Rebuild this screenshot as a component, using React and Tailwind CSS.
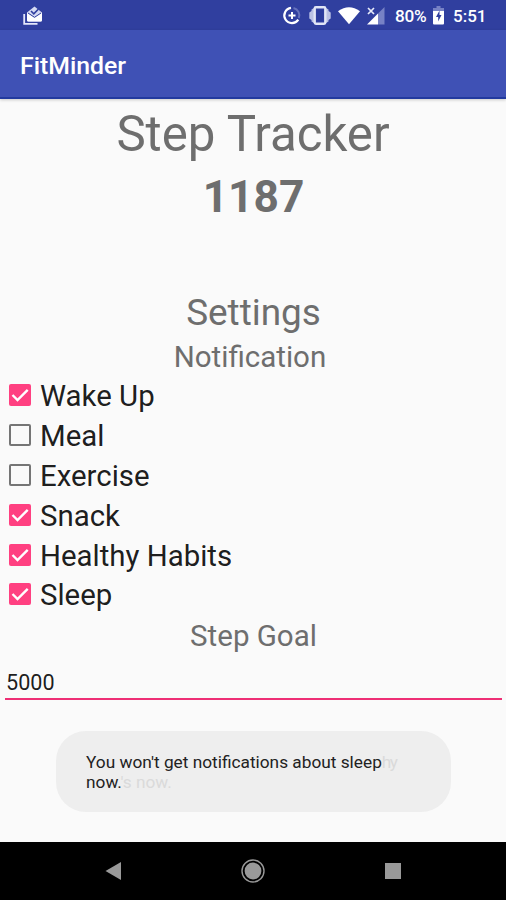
import { useState } from 'react';

const initialOptions = [
  { label: 'Wake Up', checked: true },
  { label: 'Meal', checked: false },
  { label: 'Exercise', checked: false },
  { label: 'Snack', checked: true },
  { label: 'Healthy Habits', checked: true },
  { label: 'Sleep', checked: true },
];

const StatusBar = () => (
  <div className="flex h-[30px] items-center bg-[#303f9f] text-white">
    {/* Mail notification */}
    <svg className="ml-[23px] h-5 w-5" viewBox="0 0 20 20" fill="none">
      <path d="M1.2 9V18.8H14.5" stroke="#e4e7fa" strokeWidth="1.8" />
      <path d="M4 7.5L11.5 1.5L19 7.5V15Q19 16.5 17.5 16.5H5.5Q4 16.5 4 15Z" fill="#d5daf3" />
      <path d="M4 8L11.5 13L19 8V15Q19 16.5 17.5 16.5H5.5Q4 16.5 4 15Z" fill="#fff" />
      <path d="M5 8L11.5 12.3L18 8" stroke="#303f9f" strokeWidth="1" />
      <path d="M8 6L10.8 8.8L15.5 4" stroke="#303f9f" strokeWidth="1.6" />
    </svg>

    {/* Data saver */}
    <svg className="ml-[239px] h-5 w-5" viewBox="0 0 20 20" fill="none">
      <path d="M9 2.9A7.6 7.6 0 1 0 16.3 14.6" stroke="#fff" strokeWidth="2.2" />
      <path d="M11.5 3A7.6 7.6 0 0 1 16.8 13.2" stroke="#6470bb" strokeWidth="2" />
      <path d="M10 6.9V13.9M6.5 10.4H13.5" stroke="#fff" strokeWidth="2" />
    </svg>

    {/* Vibrate */}
    <svg className="ml-[7px] h-5 w-[22px]" viewBox="0 0 22 20">
      <path d="M0.3 7.5L2.5 6V4.5L5 3H17L19.5 4.5V6L21.7 7.5V13.5L19.5 15V16.5L17 18H5L2.5 16.5V15L0.3 13.5Z" fill="#b9c0e4" />
      <rect x="5.7" y="2.2" width="10.6" height="16.6" rx="1.2" fill="#303f9f" stroke="#e1e5f6" strokeWidth="2.4" />
      <rect x="7.8" y="5" width="6.4" height="11" fill="#2a3a9c" />
    </svg>

    {/* Wifi */}
    <svg className="ml-[7px] h-5 w-[22px]" viewBox="0 0 22 20">
      <path d="M0 6.3Q11 -2 22 6.3L11 19.3Z" fill="#fff" />
    </svg>

    {/* No signal */}
    <svg className="ml-[7px] h-5 w-[18px]" viewBox="0 0 18 20">
      <path d="M17.5 2V19.5H11V8.5Z" fill="#7782c5" />
      <path d="M0 19.5L11 8.5V19.5Z" fill="#fff" />
      <path d="M1 3L7 9M7 3L1 9" stroke="#e8ebfa" strokeWidth="1.7" />
    </svg>

    <span className="ml-[10px] w-[32px] whitespace-nowrap pt-px text-[17.2px] leading-[30px] font-medium tracking-[-0.3px]">80%</span>

    {/* Battery */}
    <svg className="ml-[6px] h-5 w-[11px]" viewBox="0 0 11 20">
      <path d="M3.5 1H7.5V3H11V6H0V3H3.5Z" fill="#7782c5" />
      <path d="M0 6H11V18.5Q11 19.5 10 19.5H1Q0 19.5 0 18.5Z" fill="#fff" />
      <path d="M6.5 5.5L3 12H5.2V16.5L8.5 10H6.5Z" fill="#303f9f" />
    </svg>

    <span className="ml-[9px] pt-px text-[17px] leading-[30px] font-medium">5:51</span>
  </div>
);

const CheckRow = ({ label, checked, onToggle }) => (
  <div onClick={onToggle} className="flex h-[39.8px] items-center pl-[9px]">
    {checked ? (
      <svg className="mb-[3px] h-[22px] w-[22px]" viewBox="0 0 22 22">
        <rect width="22" height="22" rx="2" fill="#ff4081" />
        <path d="M3.5 11L8.5 16L18.7 5.8" fill="none" stroke="#fff" strokeWidth="2.4" />
      </svg>
    ) : (
      <div className="mb-[3px] h-[22px] w-[22px] rounded-[2px] border-2 border-[#757575]" />
    )}
    <span className="ml-[9px] text-[29.4px] leading-[39px] text-black/90">{label}</span>
  </div>
);

// The tail of the previous toast is still fading out after each line
const Toast = () => (
  <div className="absolute top-[731px] left-[56px] h-[81px] w-[395px] rounded-[30px] bg-[#eeeeee] pt-[21px] pl-[30px] text-[17.27px] leading-[20px] text-[#222222]">
    <p className="whitespace-nowrap">
      You won't get notifications about sleep<span className="tracking-[-1.5px] text-[#dadada]">hy</span>
    </p>
    <p className="whitespace-nowrap">
      now.<span className="text-[#dadada]">'s now.</span>
    </p>
  </div>
);

const NavBar = () => (
  <div className="flex h-[58px] items-center bg-black">
    <svg className="ml-[105px] h-[18px] w-4" viewBox="0 0 16 18">
      <path d="M0.5 9L16 0V18Z" fill="#999" />
    </svg>
    <svg className="ml-[120px] h-6 w-6" viewBox="0 0 24 24">
      <circle cx="12" cy="12" r="11" fill="none" stroke="#999" strokeWidth="1.4" />
      <circle cx="12" cy="12" r="8.4" fill="#999" />
    </svg>
    <div className="ml-[120px] h-4 w-4 bg-[#999]" />
  </div>
);

const App = () => {
  const [options, setOptions] = useState(initialOptions);
  const [goal, setGoal] = useState('5000');

  const toggle = (index) =>
    setOptions(options.map((o, i) => (i === index ? { ...o, checked: !o.checked } : o)));

  return (
    <div className="relative flex h-[900px] w-[506px] flex-col overflow-hidden bg-[#fafafa] font-[Roboto,sans-serif] text-[#6e6e6e]">
      <StatusBar />
      <header className="flex h-[69px] items-center border-b-2 border-[#223a9f] bg-[#3f51b5] pl-5 shadow-[0_1px_3px_rgba(0,0,0,0.2)]">
        <h1 className="pt-[5px] text-[24.8px] font-medium text-white">FitMinder</h1>
      </header>

      <main className="flex flex-1 flex-col pt-[6px]">
        <h2 className="text-center text-[49.2px] leading-[58px]">Step Tracker</h2>
        <p className="pt-px pl-px text-center text-[44.3px] leading-[67px] font-bold">1187</p>

        <h3 className="mt-[60px] pl-px text-center text-[36.9px] leading-[44px]">Settings</h3>
        <h4 className="mt-[2px] pr-[6px] text-center text-[29.5px] leading-[40px]">Notification</h4>
        {options.map((option, index) => (
          <CheckRow key={option.label} {...option} onToggle={() => toggle(index)} />
        ))}

        <h4 className="pl-px text-center text-[29.5px] leading-[40px]">Step Goal</h4>
        <input
          value={goal}
          onChange={(e) => setGoal(e.target.value)}
          className="mt-[8px] mr-[4px] ml-[5px] h-[36px] border-b-2 border-[#ee2f75] pt-[3px] pl-px text-[21.6px] text-black/90 outline-none"
        />
      </main>

      <Toast />
      <NavBar />
    </div>
  );
};

export default App;
